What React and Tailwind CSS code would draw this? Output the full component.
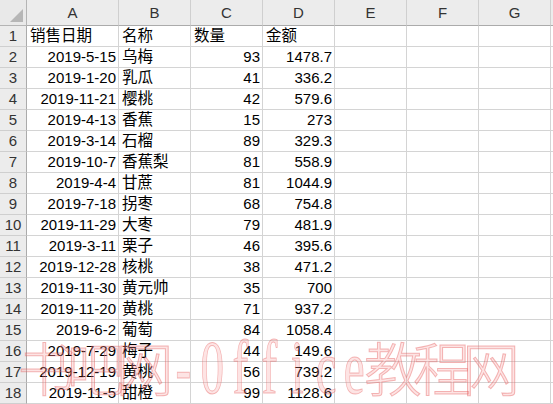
import React from "react";

const rows = [
  ["2019-5-15", "乌梅", "93", "1478.7"],
  ["2019-1-20", "乳瓜", "41", "336.2"],
  ["2019-11-21", "樱桃", "42", "579.6"],
  ["2019-4-13", "香蕉", "15", "273"],
  ["2019-3-14", "石榴", "89", "329.3"],
  ["2019-10-7", "香蕉梨", "81", "558.9"],
  ["2019-4-4", "甘蔗", "81", "1044.9"],
  ["2019-7-18", "拐枣", "68", "754.8"],
  ["2019-11-29", "大枣", "79", "481.9"],
  ["2019-3-11", "栗子", "46", "395.6"],
  ["2019-12-28", "核桃", "38", "471.2"],
  ["2019-11-30", "黄元帅", "35", "700"],
  ["2019-11-20", "黄桃", "71", "937.2"],
  ["2019-6-2", "葡萄", "84", "1058.4"],
  ["2019-7-29", "梅子", "44", "149.6"],
  ["2019-12-19", "黄桃", "56", "739.2"],
  ["2019-11-5", "甜橙", "99", "1128.6"],
];

const cols = ["A", "B", "C", "D", "E", "F", "G"];

const wm = [
  ["书", 1], ["吧", 1], ["网", 1], ["-", 0], ["0", 0], ["f", 0], ["f", 0], ["i", 0], ["c", 0], ["e", 0], ["教", 1], ["程", 1], ["网", 1],
];

function Cell({ children, align = "left", cjk = false }) {
  return (
    <div
      className={
        "h-[21px] border-r border-b border-[#d4d4d4] bg-white flex items-center overflow-visible whitespace-nowrap " +
        (cjk ? "text-[15.5px] " : "") +
        (align === "right" ? "justify-end pr-[2px]" : "justify-start pl-[3px]")
      }
    >
      {children}
    </div>
  );
}

export default function App() {
  return (
    <div className="relative w-[553px] h-[404px] overflow-hidden bg-white text-black text-[15px] font-['Liberation_Sans','Noto_Sans_CJK_SC',sans-serif]">
      <div className="grid grid-cols-[27px_92px_72px_72px_72px_72px_72px_72px_1fr] grid-rows-[26px_repeat(18,21px)]">
        <div className="relative h-[26px] bg-[#e9e9e9] border-r border-b border-[#b4b4b4]">
          <div className="absolute right-[3px] bottom-[3px] w-0 h-0 border-l-[13px] border-l-transparent border-b-[13px] border-b-[#b6b6b6]" />
        </div>
        {cols.map((c) => (
          <div
            key={c}
            className="h-[26px] bg-[#ececec] border-r border-b border-r-[#cfcfcf] border-b-[#ababab] flex items-center justify-center text-[#333] pt-[1px]"
          >
            {c}
          </div>
        ))}
        <div className="h-[26px] bg-[#ececec] border-b border-b-[#ababab]" />

        <div className="h-[21px] bg-[#ececec] border-r border-b border-r-[#ababab] border-b-[#cfcfcf] flex items-center justify-center text-[#333]">
          1
        </div>
        <Cell cjk>销售日期</Cell>
        <Cell cjk>名称</Cell>
        <Cell cjk>数量</Cell>
        <Cell cjk>金额</Cell>
        <Cell />
        <Cell />
        <Cell />
        <Cell />

        {rows.map((r, i) => (
          <React.Fragment key={i}>
            <div className="h-[21px] bg-[#ececec] border-r border-b border-r-[#ababab] border-b-[#cfcfcf] flex items-center justify-center text-[#333]">
              {i + 2}
            </div>
            <Cell align="right">{r[0]}</Cell>
            <Cell cjk>{r[1]}</Cell>
            <Cell align="right">{r[2]}</Cell>
            <Cell align="right">{r[3]}</Cell>
            <Cell />
            <Cell />
            <Cell />
            <Cell />
          </React.Fragment>
        ))}
      </div>

      {/* watermark */}
      <div className="absolute left-[22px] top-[334px] flex items-center pointer-events-none select-none leading-none text-[rgba(248,150,150,0.26)] [-webkit-text-stroke:1px_rgba(228,90,90,0.42)]">
        {wm.map(([ch, cjk], i) =>
          cjk ? (
            <span
              key={i}
              className="w-[49px] h-[64px] flex items-center justify-center text-[58px] font-light font-['Noto_Sans_CJK_SC',sans-serif]"
            >
              {ch}
            </span>
          ) : (
            <span
              key={i}
              className="w-[28.5px] h-[64px] flex items-center justify-center pt-[2px] text-[76px] font-['Liberation_Serif',serif] scale-x-[0.62]"
            >
              {ch}
            </span>
          )
        )}
      </div>
    </div>
  );
}
